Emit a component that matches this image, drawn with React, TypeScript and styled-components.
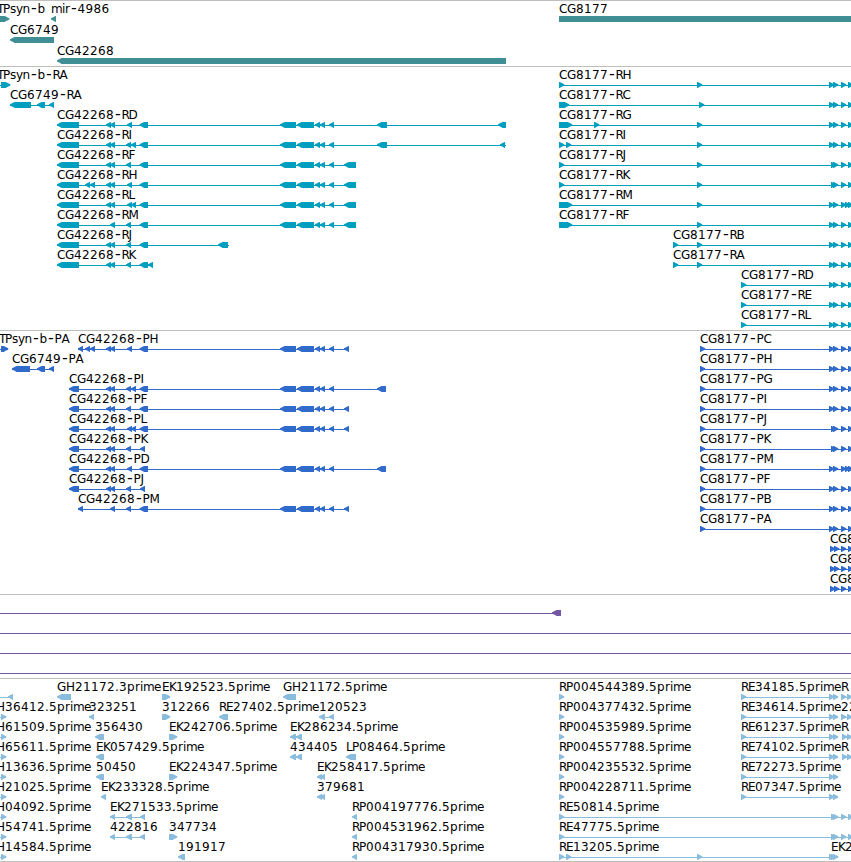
import React from 'react';
import styled, { createGlobalStyle } from 'styled-components';

const GlobalStyle = createGlobalStyle`
  body {
    margin: 0;
    background-color: #ffffff;
  }
`;

const Browser = styled.main`
  display: flex;
  flex-direction: column;
  width: 851px;
  height: 862px;
  box-sizing: border-box;
  overflow: hidden;
  border-bottom: 1px solid #bebebe;
`;

const TrackPanel = styled.section<{ $color: string; $bottom: number }>`
  display: flex;
  flex-direction: column;
  padding: 1px 0 ${(p) => p.$bottom}px;
  border-top: 1px solid #bebebe;
  color: ${(p) => p.$color};
`;

const Lane = styled.svg<{ $height: number }>`
  display: block;
  flex: none;
  width: 851px;
  height: ${(p) => p.$height}px;
  overflow: visible;
`;

const Label = styled.text`
  font-family: 'DejaVu Sans', sans-serif;
  font-size: 12px;
  fill: #000000;
`;

const Dash = styled.tspan`
  font-size: 16px;
`;

const Glyph = styled.polygon`
  fill: currentColor;
`;

const Connector = styled.rect`
  fill: currentColor;
  shape-rendering: crispEdges;
`;

type Span = [number, number];

interface Feature {
  name?: string;
  x: number;
  dir: 'left' | 'right';
  spans: Span[];
  line?: Span;
}

const HEAD = 5;

// label advances in px, digits and anything not listed are 8
const ADVANCE: Record<string, number> = {
  A: 8, B: 7, C: 8, D: 9, E: 7, F: 7, G: 9, H: 9, I: 4, J: 4, K: 7, L: 6, M: 9,
  P: 7, R: 7, T: 6, '.': 4, '-': 7.5, s: 6, y: 6.5, n: 7.5, b: 7.5, p: 8, r: 5, i: 3, m: 11, e: 7,
};

const glyphPositions = (text: string, x: number) => {
  let pos = x;
  return text
    .split('')
    .map((ch) => {
      const at = ch === '-' ? pos + 1 : pos;
      pos += ADVANCE[ch] ?? 8;
      return at;
    })
    .join(' ');
};

const left = (name: string | undefined, x: number, spans: Span[], line?: Span): Feature => ({
  name, x, dir: 'left', spans, line,
});

const right = (name: string | undefined, x: number, spans: Span[], line?: Span): Feature => ({
  name, x, dir: 'right', spans, line,
});

// small exons are drawn as a bare arrow head
const heads = (...starts: number[]): Span[] => starts.map((s): Span => [s, s + HEAD]);

const MIDDLE: Span[] = [[280, 296], [297, 314], ...heads(315, 320, 329)];
const WIDE: Span = [139.5, 148];
const TAIL = heads(829, 833, 841, 848);
const TAIL_LATE = heads(831, 833, 841, 848);
const TAIL_DENSE = heads(829, 833, 841, 845, 848);

const GENES: Feature[][] = [
  [
    right('TPsyn-b', -3, [[-10, 9]]),
    left('mir-4986', 51, heads(51)),
    right('CG8177', 559, [[559, 870]]),
  ],
  [left('CG6749', 10, [[10, 54]])],
  [left('CG42268', 57, [[57, 506]])],
];

const rna = (name: string, small: number[], rest: Span[], line?: Span) =>
  left(`CG42268-${name}`, 57, [[57, 79], ...heads(...small), WIDE, ...rest], line);

const cg8177 = (name: string, x: number, spans: Span[], tail = TAIL) =>
  right(`CG8177-${name}`, x, [...spans, ...tail]);

const TRANSCRIPTS: Feature[][] = [
  [right('TPsyn-b-RA', -3, [[1, 10]], [0, 10]), cg8177('RH', 559, heads(559, 697))],
  [left('CG6749-RA', 10, [[10, 31], [37, 45], [49, 54]]), cg8177('RC', 559, [[559, 569], [699, 704]])],
  [
    rna('RD', [106, 110, 127], [...MIDDLE, [377, 387], [498, 506]]),
    cg8177('RG', 559, [[559, 572], ...heads(594, 697)]),
  ],
  [
    rna('RI', [106, 110, 126, 131], [...MIDDLE, [377, 387], [500, 505]], [57, 506]),
    cg8177('RI', 559, heads(559, 566, 697)),
  ],
  [rna('RF', [106, 110, 126], [...MIDDLE, [344, 356]]), cg8177('RJ', 559, heads(559, 697), TAIL_LATE)],
  [rna('RH', [85, 90, 106, 110, 127], [...MIDDLE, [344, 356]]), cg8177('RK', 559, heads(559, 697), TAIL_LATE)],
  [
    rna('RL', [106, 110, 127, 131], [...MIDDLE, [344, 356]]),
    cg8177('RM', 559, [[559, 572], [697, 702]], TAIL_DENSE),
  ],
  [rna('RM', [110, 126], [...MIDDLE, [344, 356]]), cg8177('RF', 559, [[559, 572], [697, 702]])],
  [rna('RJ', [106, 110, 126], [[218, 228]], [57, 229]), cg8177('RB', 673, heads(673, 697))],
  [rna('RK', [106, 110, 126], heads(148)), cg8177('RA', 673, heads(673, 697))],
  [cg8177('RD', 741, heads(741))],
  [cg8177('RE', 741, heads(741))],
  [cg8177('RL', 741, heads(741))],
];

const cds = (name: string, small: number[], rest: Span[]) =>
  left(`CG42268-${name}`, 69, [[69, 79], ...heads(...small), ...rest]);

const CODING: Feature[][] = [
  [
    right('TPsyn-b-PA', -1, [[1, 8]], [0, 8]),
    left('CG42268-PH', 78, [...heads(78, 85, 90, 106, 110, 127), WIDE, ...MIDDLE, [344, 349]]),
    cg8177('PC', 700, heads(700)),
  ],
  [left('CG6749-PA', 12, [[12, 30], [37, 45], [49, 54]]), cg8177('PH', 700, heads(700))],
  [cds('PI', [106, 110, 126, 131], [WIDE, ...MIDDLE, [377, 386]]), cg8177('PG', 700, heads(700))],
  [cds('PF', [106, 110, 126], [WIDE, ...MIDDLE, [344, 349]]), cg8177('PI', 700, heads(700))],
  [cds('PL', [106, 110, 127, 131], [WIDE, ...MIDDLE, [344, 349]]), cg8177('PJ', 700, heads(700), TAIL_LATE)],
  [cds('PK', [106, 110, 126, 140], []), cg8177('PK', 700, heads(700), TAIL_LATE)],
  [cds('PD', [106, 110, 127], [WIDE, ...MIDDLE, [377, 386]]), cg8177('PM', 700, heads(700), TAIL_DENSE)],
  [cds('PJ', [106, 110, 126, 140], []), cg8177('PF', 700, heads(700))],
  [
    left('CG42268-PM', 78, [...heads(78, 110, 126), WIDE, ...MIDDLE, [344, 349]]),
    cg8177('PB', 700, heads(700)),
  ],
  [cg8177('PA', 700, heads(700))],
  [right('CG8', 830, heads(830, 834, 841, 848))],
  [right('CG8', 830, heads(830, 834, 841, 848))],
  [right('CG8', 830, heads(830, 834, 841, 848))],
];

const INSERTIONS: Feature[][] = [
  [left(undefined, 0, [[552, 561]], [0, 561])],
  [left(undefined, 0, [], [0, 851])],
  [left(undefined, 0, [], [0, 851])],
  [left(undefined, 0, [], [0, 851])],
];

const edge = (name: string) => right(name, -4, heads(1), [0, 6]);
const rp = (name: string) => right(name, 559, heads(559));
const re = (name: string) => right(name, 741, heads(741, 829, 833));

const ESTS: Feature[][] = [
  [
    left(undefined, 0, heads(8), [0, 13]),
    left('GH21172.3prime', 57, [[57, 71]]),
    right('EK192523.5prime', 162, [[162, 170]]),
    left('GH21172.5prime', 283, [[283, 296]]),
    rp('RP004544389.5prime'),
    re('RE34185.5prime'),
    right('R', 841, heads(841, 847)),
  ],
  [
    edge('H36412.5prime'),
    left('323251', 89, heads(89)),
    right('312266', 162, [[162, 170]]),
    left('RE27402.5prime', 219, [[219, 228]]),
    left('120523', 319, [[319, 325], [329, 334]]),
    rp('RP004377432.5prime'),
    re('RE34614.5prime'),
    right('22', 841, heads(841, 847)),
  ],
  [
    edge('H61509.5prime'),
    left('356430', 95, [[95, 104]]),
    right('EK242706.5prime', 169, [[169, 177]]),
    left('EK286234.5prime', 290, [[290, 296], [296, 302]]),
    rp('RP004535989.5prime'),
    re('RE61237.5prime'),
    right('R', 841, heads(842, 847)),
  ],
  [
    edge('H65611.5prime'),
    left('EK057429.5prime', 96, [[96, 104]]),
    left('434405', 290, [[290, 296], [296, 302]]),
    left('LP08464.5prime', 346, [[346, 356]]),
    rp('RP004557788.5prime'),
    re('RE74102.5prime'),
    right('R', 841, heads(842, 847)),
  ],
  [
    edge('H13636.5prime'),
    left('50450', 96, [[96, 104]]),
    right('EK224347.5prime', 169, [[169, 177]]),
    left('EK258417.5prime', 317, heads(317, 320)),
    rp('RP004235532.5prime'),
    re('RE72273.5prime'),
  ],
  [
    edge('H21025.5prime'),
    left('EK233328.5prime', 101, heads(101)),
    left('379681', 317, heads(317, 320)),
    rp('RP004228711.5prime'),
    re('RE07347.5prime'),
  ],
  [
    edge('H04092.5prime'),
    left('EK271533.5prime', 110, [[110, 115], [126, 132], [140, 145]]),
    left('RP004197776.5prime', 352, heads(352)),
    right('RE50814.5prime', 559, [...heads(559), ...TAIL_LATE]),
  ],
  [
    edge('H54741.5prime'),
    left('422816', 110, [[110, 115], [126, 132], [140, 145]]),
    right('347734', 169, [[169, 177]]),
    left('RP004531962.5prime', 352, heads(352)),
    right('RE47775.5prime', 559, [...heads(559), ...TAIL_LATE]),
  ],
  [
    edge('H14584.5prime'),
    left('191917', 178, [[178, 185]]),
    left('RP004317930.5prime', 352, heads(352)),
    right('RE13205.5prime', 559, heads(559, 566, 697, 829, 831, 833)),
    right('EK2', 831, []),
  ],
];

// blunt arrow on the strand side, square on the other
const exonPoints = ([start, end]: Span, dir: Feature['dir']) => {
  const tip = dir === 'left' ? start : end + 0.3;
  const tail = dir === 'left' ? end : start;
  const step = dir === 'left' ? 1 : -1;
  return [
    [tip, 16.3],
    [tip + step * 3, 14.8],
    [tip + step * 4.6, 14],
    [tail, 14],
    [tail, 20],
    [tip + step * 4.6, 20],
    [tip + step * 3, 19],
    [tip, 17.5],
  ]
    .map((p) => p.join(','))
    .join(' ');
};

const FeatureGlyph: React.FC<{ feature: Feature }> = ({ feature }) => {
  const { name, x, dir, spans } = feature;
  const line = feature.line ?? (spans.length > 1 ? [spans[0][0], spans[spans.length - 1][1]] : null);

  return (
    <g>
      {name && (
        <Label x={glyphPositions(name, x)} y={11}>
          {name.split(/(-)/).map((part, i) => (part === '-' ? <Dash key={i}>-</Dash> : part))}
        </Label>
      )}
      {line && <Connector x={line[0]} y={17} width={line[1] - line[0]} height={1} />}
      {spans.map((span, i) => (
        <Glyph key={i} points={exonPoints(span, dir)} />
      ))}
    </g>
  );
};

interface TrackProps {
  color: string;
  lanes: Feature[][];
  laneHeight?: number;
  bottom?: number;
}

const Track: React.FC<TrackProps> = ({ color, lanes, laneHeight = 20, bottom = 2 }) => (
  <TrackPanel $color={color} $bottom={bottom}>
    {lanes.map((features, i) => (
      <Lane key={i} $height={laneHeight}>
        {features.map((feature, j) => (
          <FeatureGlyph key={j} feature={feature} />
        ))}
      </Lane>
    ))}
  </TrackPanel>
);

const App: React.FC = () => {
  return (
    <>
      <GlobalStyle />
      <Browser>
        <Track color="#408f94" lanes={GENES} laneHeight={21} bottom={1} />
        <Track color="#009fbf" lanes={TRANSCRIPTS} />
        <Track color="#306bcc" lanes={CODING} />
        <Track color="#7458a6" lanes={INSERTIONS} />
        <Track color="#8abcdd" lanes={ESTS} bottom={1} />
      </Browser>
    </>
  );
};

export default App;
